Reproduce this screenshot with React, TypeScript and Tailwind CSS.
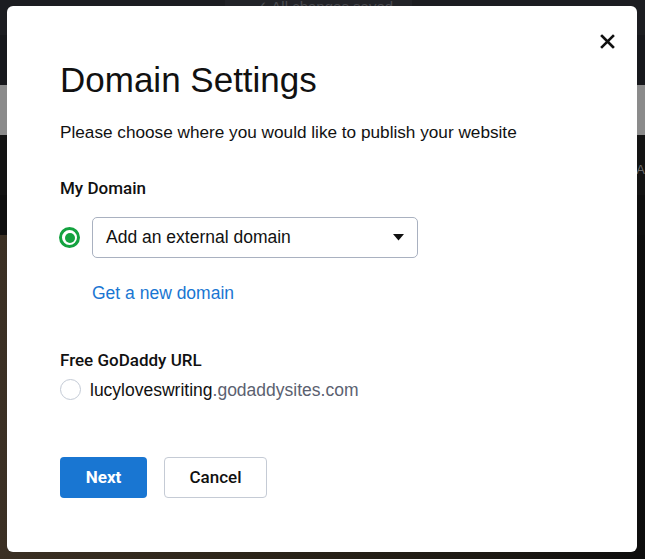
import React from "react";

const roboto = { fontFamily: "Roboto, 'Liberation Sans', Arial, sans-serif" };

export default function App() {
  return (
    <div
      className="relative w-[645px] h-[559px] overflow-hidden bg-[#0d0d0d]"
      style={{ fontFamily: "'Liberation Sans', Arial, sans-serif" }}
    >
      {/* backdrop bands */}
      <div className="flex flex-col">
        <div className="h-[35px] bg-[#1c1d21] flex">
          <div className="ml-[225px] w-[187px] h-[35px] bg-[#222328] text-[#4a4b50] text-[15px] leading-[14px] pl-[30px] whitespace-nowrap">✓ All changes saved</div>
        </div>
        <div className="h-[50px] bg-[#17181c]" />
        <div className="h-[50px] bg-[#8b8b8b]" />
        <div className="h-[60px] bg-[#131313] flex justify-end">
          <span className="text-[#6b6b6b] text-[13px] mt-[25px]">A</span>
        </div>
        <div className="h-[40px] bg-[#0f0f0f]" />
        <div className="h-[324px] bg-[linear-gradient(90deg,#3b3024_0%,#2b2419_40%,#1a1712_80%,#0d0d0d_100%)]" />
      </div>

      {/* modal */}
      <div className="absolute left-[7px] top-[6px] w-[630px] h-[546px] bg-white rounded-[6px]">
        <button className="absolute left-[592px] top-[27px] w-[16px] h-[16px] flex items-center justify-center">
          <svg width="15" height="15" viewBox="0 0 15 15">
            <path d="M2 2 L13 13 M13 2 L2 13" stroke="#111" strokeWidth="2.6" strokeLinecap="square" />
          </svg>
        </button>

        <div className="pl-[53px] pt-[54px] flex flex-col">
          <h1 className="text-[35px] leading-[40px] text-[#111] font-normal">Domain Settings</h1>
          <p className="mt-[22px] text-[17.2px] leading-[20px] text-[#111]">
            Please choose where you would like to publish your website
          </p>

          <div className="mt-[36px] text-[17px] leading-[20px] font-medium text-[#111]" style={roboto}>My Domain</div>

          <div className="mt-[19px] flex items-center">
            <span className="w-[21px] h-[21px] rounded-full border-[3px] border-[#13a23f] flex items-center justify-center ml-[-1px]">
              <span className="w-[10px] h-[10px] rounded-full bg-[#13a23f]" />
            </span>
            <div className="ml-[12px] w-[326px] h-[41px] border border-[#a9b1c0] rounded-[5px] flex items-center justify-between pl-[13px] pr-[13px]">
              <span className="text-[17.5px] text-[#111]">Add an external domain</span>
              <svg width="11" height="7" viewBox="0 0 11 7">
                <path d="M0 0 H11 L5.5 6.5 Z" fill="#111" />
              </svg>
            </div>
          </div>

          <a className="mt-[25px] ml-[32px] text-[17.5px] leading-[20px] text-[#1976d2]">Get a new domain</a>

          <div className="mt-[47px] text-[17px] leading-[20px] font-medium text-[#111]" style={roboto}>Free GoDaddy URL</div>

          <div className="mt-[9px] flex items-center">
            <span className="w-[21px] h-[21px] rounded-full border-[1.5px] border-[#c3cad5]" />
            <span className="ml-[9px] text-[17.5px] leading-[20px] text-[#111]">
              lucyloveswriting<span className="text-[#5b6170]">.godaddysites.com</span>
            </span>
          </div>

          <div className="mt-[57px] flex gap-[17px]">
            <button className="w-[87px] h-[41px] rounded-[4px] bg-[#1976d2] text-white text-[17px] font-bold" style={roboto}>Next</button>
            <button className="w-[103px] h-[41px] rounded-[4px] bg-white border-[1.5px] border-[#c5cbd5] text-[#111] text-[17px] font-medium" style={roboto}>Cancel</button>
          </div>
        </div>
      </div>
    </div>
  );
}
